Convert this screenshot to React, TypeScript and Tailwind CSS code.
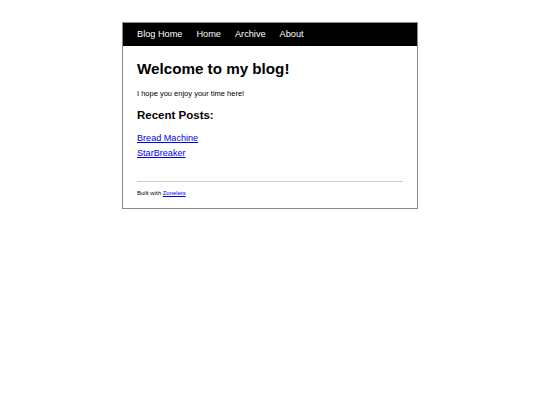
export default function App() {
  return (
    <div className="min-h-screen bg-white pt-[22px]" style={{ fontFamily: '"Liberation Sans", Arial, sans-serif' }}>
      <div className="mx-auto w-[296px] border border-[#888888] bg-white">
        {/* Nav */}
        <nav className="flex h-[23px] items-center gap-[14px] bg-black px-[14px] text-[9.2px] text-white">
          <a href="#">Blog Home</a>
          <a href="#">Home</a>
          <a href="#">Archive</a>
          <a href="#">About</a>
        </nav>

        {/* Content */}
        <main className="px-[14px] pt-[14px] pb-[11px] text-black">
          <h1 className="text-[15.2px] font-bold leading-[18px]">Welcome to my blog!</h1>
          <p className="mt-[11px] text-[7.5px] leading-[10px]">I hope you enjoy your time here!</p>

          <h2 className="mt-[9px] text-[11.5px] font-bold leading-[14px]">Recent Posts:</h2>
          <ul className="mt-[9px] text-[9.1px] leading-[15px]">
            <li>
              <a href="#" className="text-[#0000ee] underline">Bread Machine</a>
            </li>
            <li>
              <a href="#" className="text-[#0000ee] underline">StarBreaker</a>
            </li>
          </ul>

          <hr className="mt-[20px] border-t border-[#cccccc]" />

          <footer className="mt-[7px] text-[6px] leading-[8px]">
            Built with <a href="#" className="text-[#0000ee] underline">Zonelets</a>
          </footer>
        </main>
      </div>
    </div>
  )
}
